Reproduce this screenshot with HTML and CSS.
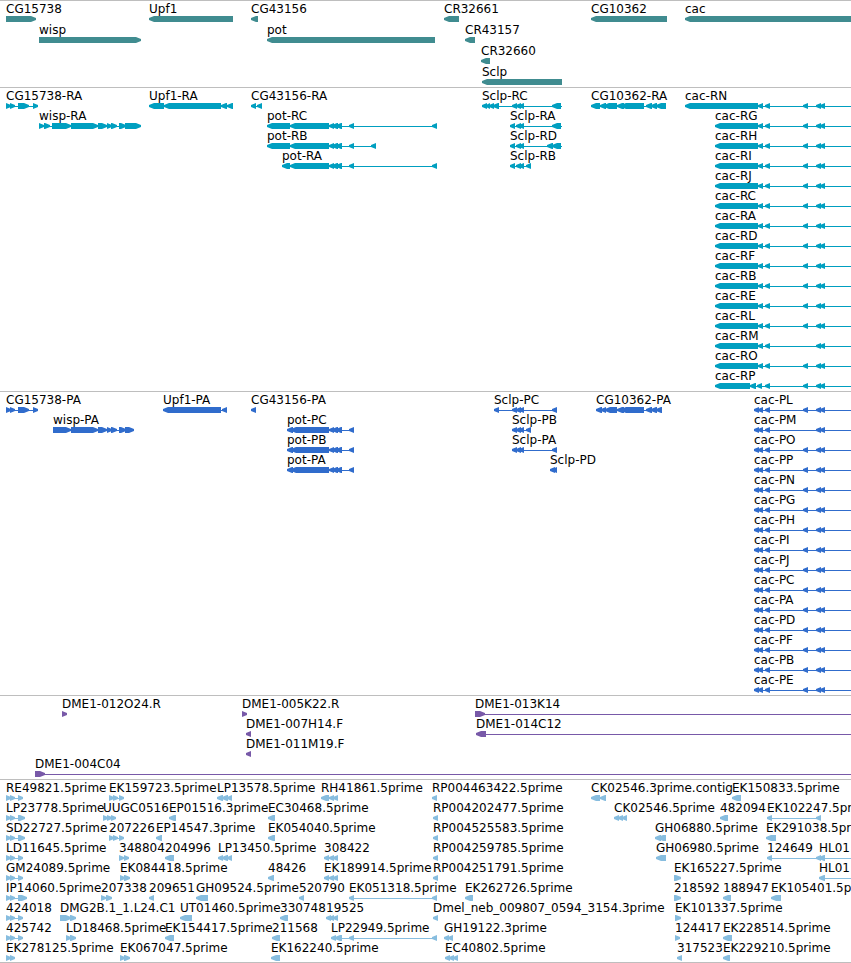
FILE: index.html
```
<!DOCTYPE html>
<html lang="en">
<head>
  <meta charset="UTF-8">
  <title>Genome Tracks</title>
  <link rel="stylesheet" href="styles.css">
</head>
<body>
  <main class="browser">
    <section class="track genes" id="genes" aria-label="Genes"></section>
    <section class="track transcripts" id="transcripts" aria-label="Transcripts"></section>
    <section class="track proteins" id="proteins" aria-label="Proteins"></section>
    <section class="track bacs" id="bacs" aria-label="BACs"></section>
    <section class="track ests" id="ests" aria-label="ESTs"></section>
  </main>

  <script src="script.js"></script>
</body>
</html>
```
FILE: styles.css
```
body {
  margin: 0;
  background: #ffffff;
  color: #000000;
  font-family: "DejaVu Sans", sans-serif;
  font-size: 12px;
}

.browser {
  overflow: hidden;
  border-bottom: 1px solid #bebebe;
}

.track {
  border-top: 1px solid #bebebe;
  padding-bottom: 3px;
}

.genes,
.ests {
  padding-bottom: 2px;
}

.row {
  position: relative;
  height: 20px;
}

.genes .row {
  height: 21px;
}

/* features sit on the genome axis, left comes from the data */
.feature {
  position: absolute;
  top: 0;
}

.label {
  display: block;
  height: 15px;
  line-height: 17px;
  white-space: nowrap;
}

.glyph {
  display: block;
  height: 6px;
  overflow: visible;
  fill: currentColor;
}

.genes .glyph {
  color: #408c90;
}

.transcripts .glyph {
  color: #009fc0;
}

.proteins .glyph {
  color: #306ccc;
}

.bacs .glyph {
  color: #7859a8;
}

.ests .glyph {
  color: #87bddf;
}
```
FILE: script.js
```
const SVG_NS = 'http://www.w3.org/2000/svg';
const HEAD = 5;
const HEIGHT = 6;
// end of a feature that runs out of the window
const OPEN = 4000;

// exon blocks shared by several features
const first = [[6, 11], [10, 15]];
const cg15738 = [...first, [18, 29], [33, 38]];
const potMid = [[329, 334], [332, 338], [336, 342], [349, 354]];
const pot = [[267, 290], [290, 329], ...potMid];
const potCds = [[287, 293], [291, 329], ...potMid];
const sclpMid = [[512, 517], [516, 521], [519, 524]];
const sclpUtr = [[510, 515], [516, 521], [519, 524]];
const cacEnd = [[803, 808], [816, 821], [820, 825]];
const cacTail = [[758, 763], [765, 770], ...cacEnd];
const cacCds = [[754, 759], [758, 763], [765, 770], ...cacEnd];
const noMiddle = blocks => blocks.filter(b => b[0] !== 803);
const est = [...first, [18, 23]];
const rh = [[329, 334], [333, 338]];

// feature: [name, strand, blocks, end of the connector line]
const cacRna = (name, blocks = [[715, 758], ...cacTail]) => ['cac-' + name, '-', blocks, OPEN];
const cacPep = (name, blocks = cacCds) => ['cac-' + name, '-', blocks, OPEN];

const tracks = {
  genes: [
    [
      ['CG15738', '+', [[6, 36]]],
      ['Upf1', '-', [[149, 233]]],
      ['CG43156', '-', [[251, 258]]],
      ['CR32661', '-', [[444, 459]]],
      ['CG10362', '-', [[591, 667]]],
      ['cac', '-', [[685, OPEN]]]
    ],
    [
      ['wisp', '+', [[39, 141]]],
      ['pot', '-', [[267, 435]]],
      ['CR43157', '-', [[465, 475]]]
    ],
    [['CR32660', '-', [[481, 490]]]],
    [['Sclp', '-', [[482, 562]]]]
  ],

  transcripts: [
    [
      ['CG15738-RA', '+', cg15738],
      ['Upf1-RA', '-', [[149, 164], [164, 221], [221, 227], [227, 233]]],
      ['CG43156-RA', '-', [[251, 256], [257, 262]]],
      ['Sclp-RC', '-', [[482, 487], [486, 490], [489, 494], [493, 499], ...sclpMid, [552, 561]], 562],
      ['CG10362-RA', '-', [[591, 600], [600, 606], [604, 617], [617, 624], [621, 644], [646, 652], [651, 657], [656, 666]]],
      cacRna('RN', [[685, 758], ...cacTail])
    ],
    [
      ['wisp-RA', '+', [[39, 44], [44, 50], [52, 71], [71, 98], [98, 107], [107, 112], [111, 117], [119, 126], [125, 141]]],
      ['pot-RC', '-', [...pot, [432, 437]]],
      ['Sclp-RA', '-', [...sclpUtr, [552, 561]], 562],
      cacRna('RG')
    ],
    [
      ['pot-RB', '-', [...pot, [371, 376]]],
      ['Sclp-RD', '-', [...sclpUtr, [547, 553], [552, 561]], 562],
      cacRna('RH')
    ],
    [
      ['pot-RA', '-', [[282, 290], [290, 329], ...potMid, [432, 437]]],
      ['Sclp-RB', '-', [...sclpUtr, [526, 531]]],
      cacRna('RI')
    ],
    [cacRna('RJ')],
    [cacRna('RC')],
    [cacRna('RA')],
    [cacRna('RD')],
    [cacRna('RF')],
    [cacRna('RB')],
    [cacRna('RE')],
    [cacRna('RL')],
    [cacRna('RM', [[715, 758], ...noMiddle(cacTail)])],
    [cacRna('RO')],
    [cacRna('RP', [[715, 750], [750, 756], [757, 762], [765, 770], ...cacEnd])]
  ],

  proteins: [
    [
      ['CG15738-PA', '+', cg15738],
      ['Upf1-PA', '-', [[163, 221], [222, 227]]],
      ['CG43156-PA', '-', [[251, 256]]],
      ['Sclp-PC', '-', [[494, 499], ...sclpMid, [552, 557]]],
      ['CG10362-PA', '-', [[596, 602], [601, 606], [605, 617], [617, 624], [621, 644], [646, 652], [651, 657], [656, 662]]],
      cacPep('PL')
    ],
    [
      ['wisp-PA', '+', [[53, 71], [71, 98], [98, 107], [107, 112], [111, 117], [119, 126], [125, 134]]],
      ['pot-PC', '-', potCds],
      ['Sclp-PB', '-', [...sclpMid, [526, 531]]],
      cacPep('PM', noMiddle(cacCds))
    ],
    [
      ['pot-PB', '-', potCds],
      ['Sclp-PA', '-', [...sclpMid, [552, 557]]],
      cacPep('PO')
    ],
    [
      ['pot-PA', '-', potCds],
      ['Sclp-PD', '-', [[550, 555], [552, 557]]],
      cacPep('PP')
    ],
    [cacPep('PN')],
    [cacPep('PG')],
    [cacPep('PH')],
    [cacPep('PI')],
    [cacPep('PJ')],
    [cacPep('PC')],
    [cacPep('PA')],
    [cacPep('PD')],
    [cacPep('PF')],
    [cacPep('PB')],
    [cacPep('PE')]
  ],

  bacs: [
    [
      ['DME1-012O24.R', '+', [[62, 67]]],
      ['DME1-005K22.R', '+', [[242, 247]]],
      ['DME1-013K14', '+', [[475, 485]], OPEN]
    ],
    [
      ['DME1-007H14.F', '-', [[246, 251]]],
      ['DME1-014C12', '-', [[476, 486]], OPEN]
    ],
    [['DME1-011M19.F', '-', [[246, 251]]]],
    [['DME1-004C04', '+', [[35, 45]], OPEN]]
  ],

  ests: [
    [
      ['RE49821.5prime', '+', est],
      ['EK159723.5prime', '+', [[109, 114], [113, 118], [119, 124]]],
      ['LP13578.5prime', '-', [[217, 223], [222, 228], [227, 232]]],
      ['RH41861.5prime', '-', [[321, 329], ...rh]],
      ['RP004463422.5prime', '-', [[432, 437]]],
      ['CK02546.3prime.contig', '-', [[591, 600], [600, 606]]],
      ['EK150833.5prime', '-', [[732, 741]]]
    ],
    [
      ['LP23778.5prime', '+', [...first, [18, 25]]],
      ['UUGC0516', '+', [[103, 108], [107, 112], [111, 116]]],
      ['EP01516.3prime', '-', [[169, 176]]],
      ['EC30468.5prime', '-', [[268, 275]]],
      ['RP004202477.5prime', '-', [[433, 438]]],
      ['CK02546.5prime', '-', [[614, 619], [618, 623], [622, 627]]],
      ['482094', '-', [[720, 728]]],
      ['EK102247.5prime', '-', [[767, 772], [816, 821]]]
    ],
    [
      ['SD22727.5prime', '+', [...first, [18, 25]]],
      ['207226', '+', [[109, 114], [113, 118], [119, 124]]],
      ['EP14547.3prime', '-', [[156, 162]]],
      ['EK054040.5prime', '-', [[268, 275]]],
      ['RP004525583.5prime', '-', [[433, 438]]],
      ['GH06880.5prime', '-', [[655, 661], [658, 666]]],
      ['EK291038.5prime', '-', [[766, 776]]]
    ],
    [
      ['LD11645.5prime', '+', est],
      ['348804', '+', [[119, 124], [124, 129]]],
      ['204996', '-', [[165, 174]]],
      ['LP13450.5prime', '-', [[218, 223], [222, 228], [227, 232]]],
      ['308422', '-', [[324, 329], ...rh]],
      ['RP004259785.5prime', '-', [[433, 438]]],
      ['GH06980.5prime', '-', [[656, 666]]],
      ['124649', '-', [[767, 772], [816, 821]]],
      ['HL01', '-', [[819, 825]], OPEN]
    ],
    [
      ['GM24089.5prime', '+', est],
      ['EK084418.5prime', '+', [[120, 125], [124, 130]]],
      ['48426', '-', [[268, 274]]],
      ['EK189914.5prime', '-', [[324, 329], ...rh]],
      ['RP004251791.5prime', '-', [[433, 438]]],
      ['EK165227.5prime', '+', [[674, 681]]],
      ['HL01', '-', [[819, 825]], OPEN]
    ],
    [
      ['IP14060.5prime', '+', [...first, [18, 27]]],
      ['207338', '+', [[101, 106], [106, 112]]],
      ['209651', '-', [[149, 154]]],
      ['GH09524.5prime', '-', [[196, 208]]],
      ['520790', '-', [[299, 304]]],
      ['EK051318.5prime', '-', [[349, 354], [432, 437]]],
      ['EK262726.5prime', '-', [[465, 473]]],
      ['218592', '+', [[674, 681]]],
      ['188947', '-', [[723, 731]]],
      ['EK105401.5prime', '-', [[771, 781]]]
    ],
    [
      ['424018', '+', est],
      ['DMG2B.1_1.L24.C1', '+', [[60, 71], [70, 76]]],
      ['UT01460.5prime', '-', [[180, 192]]],
      ['330748', '-', [[280, 288]]],
      ['19525', '-', [[326, 331], ...rh]],
      ['Dmel_neb_009807_0594_3154.3prime', '-', [[433, 438]]],
      ['EK101337.5prime', '+', [[675, 681]]]
    ],
    [
      ['425742', '+', est],
      ['LD18468.5prime', '+', [[66, 71], [70, 76]]],
      ['EK154417.5prime', '-', [[165, 174]]],
      ['211568', '-', [[272, 280]]],
      ['LP22949.5prime', '-', [[331, 336], [335, 342], [349, 354], [432, 437]]],
      ['GH19122.3prime', '-', [[444, 449], [448, 453]]],
      ['124417', '+', [[675, 680]]],
      ['EK228514.5prime', '-', [[723, 732]]]
    ],
    [
      ['EK278125.5prime', '+', first],
      ['EK067047.5prime', '+', [[120, 125], [124, 130]]],
      ['EK162240.5prime', '-', [[271, 280]]],
      ['EC40802.5prime', '-', [[445, 450], [449, 454], [453, 458]]],
      ['317523', '-', [[677, 682]]],
      ['EK229210.5prime', '-', [[723, 730]]]
    ]
  ]
};

// block with a blunt two pixel tip on the strand side
function blockPath(from, to, strand) {
  const head = Math.min(HEAD, to - from);
  if (strand === '+') {
    return `M${from} 0H${to - head}L${to} 2V4L${to - head} ${HEIGHT}H${from}Z`;
  }
  return `M${to} 0H${from + head}L${from} 2V4L${from + head} ${HEIGHT}H${to}Z`;
}

function drawGlyph(start, end, strand, blocks) {
  const svg = document.createElementNS(SVG_NS, 'svg');
  svg.setAttribute('class', 'glyph');
  svg.setAttribute('width', end - start);
  svg.setAttribute('height', HEIGHT);

  if (blocks.length > 1 || end > blocks[0][1]) {
    const connector = document.createElementNS(SVG_NS, 'path');
    connector.setAttribute('d', `M0 3H${end - start}V4H0Z`);
    svg.appendChild(connector);
  }

  blocks.forEach(([from, to]) => {
    const block = document.createElementNS(SVG_NS, 'path');
    block.setAttribute('d', blockPath(from - start, to - start, strand));
    svg.appendChild(block);
  });
  return svg;
}

function drawFeature([name, strand, blocks, lineEnd]) {
  const start = blocks[0][0];
  const end = lineEnd || blocks[blocks.length - 1][1];

  const feature = document.createElement('div');
  feature.className = 'feature';
  feature.style.left = start + 'px';

  const label = document.createElement('span');
  label.className = 'label';
  label.textContent = name;

  feature.appendChild(label);
  feature.appendChild(drawGlyph(start, end, strand, blocks));
  return feature;
}

Object.keys(tracks).forEach(id => {
  const track = document.getElementById(id);
  tracks[id].forEach(features => {
    const row = document.createElement('div');
    row.className = 'row';
    features.forEach(f => row.appendChild(drawFeature(f)));
    track.appendChild(row);
  });
});
```
